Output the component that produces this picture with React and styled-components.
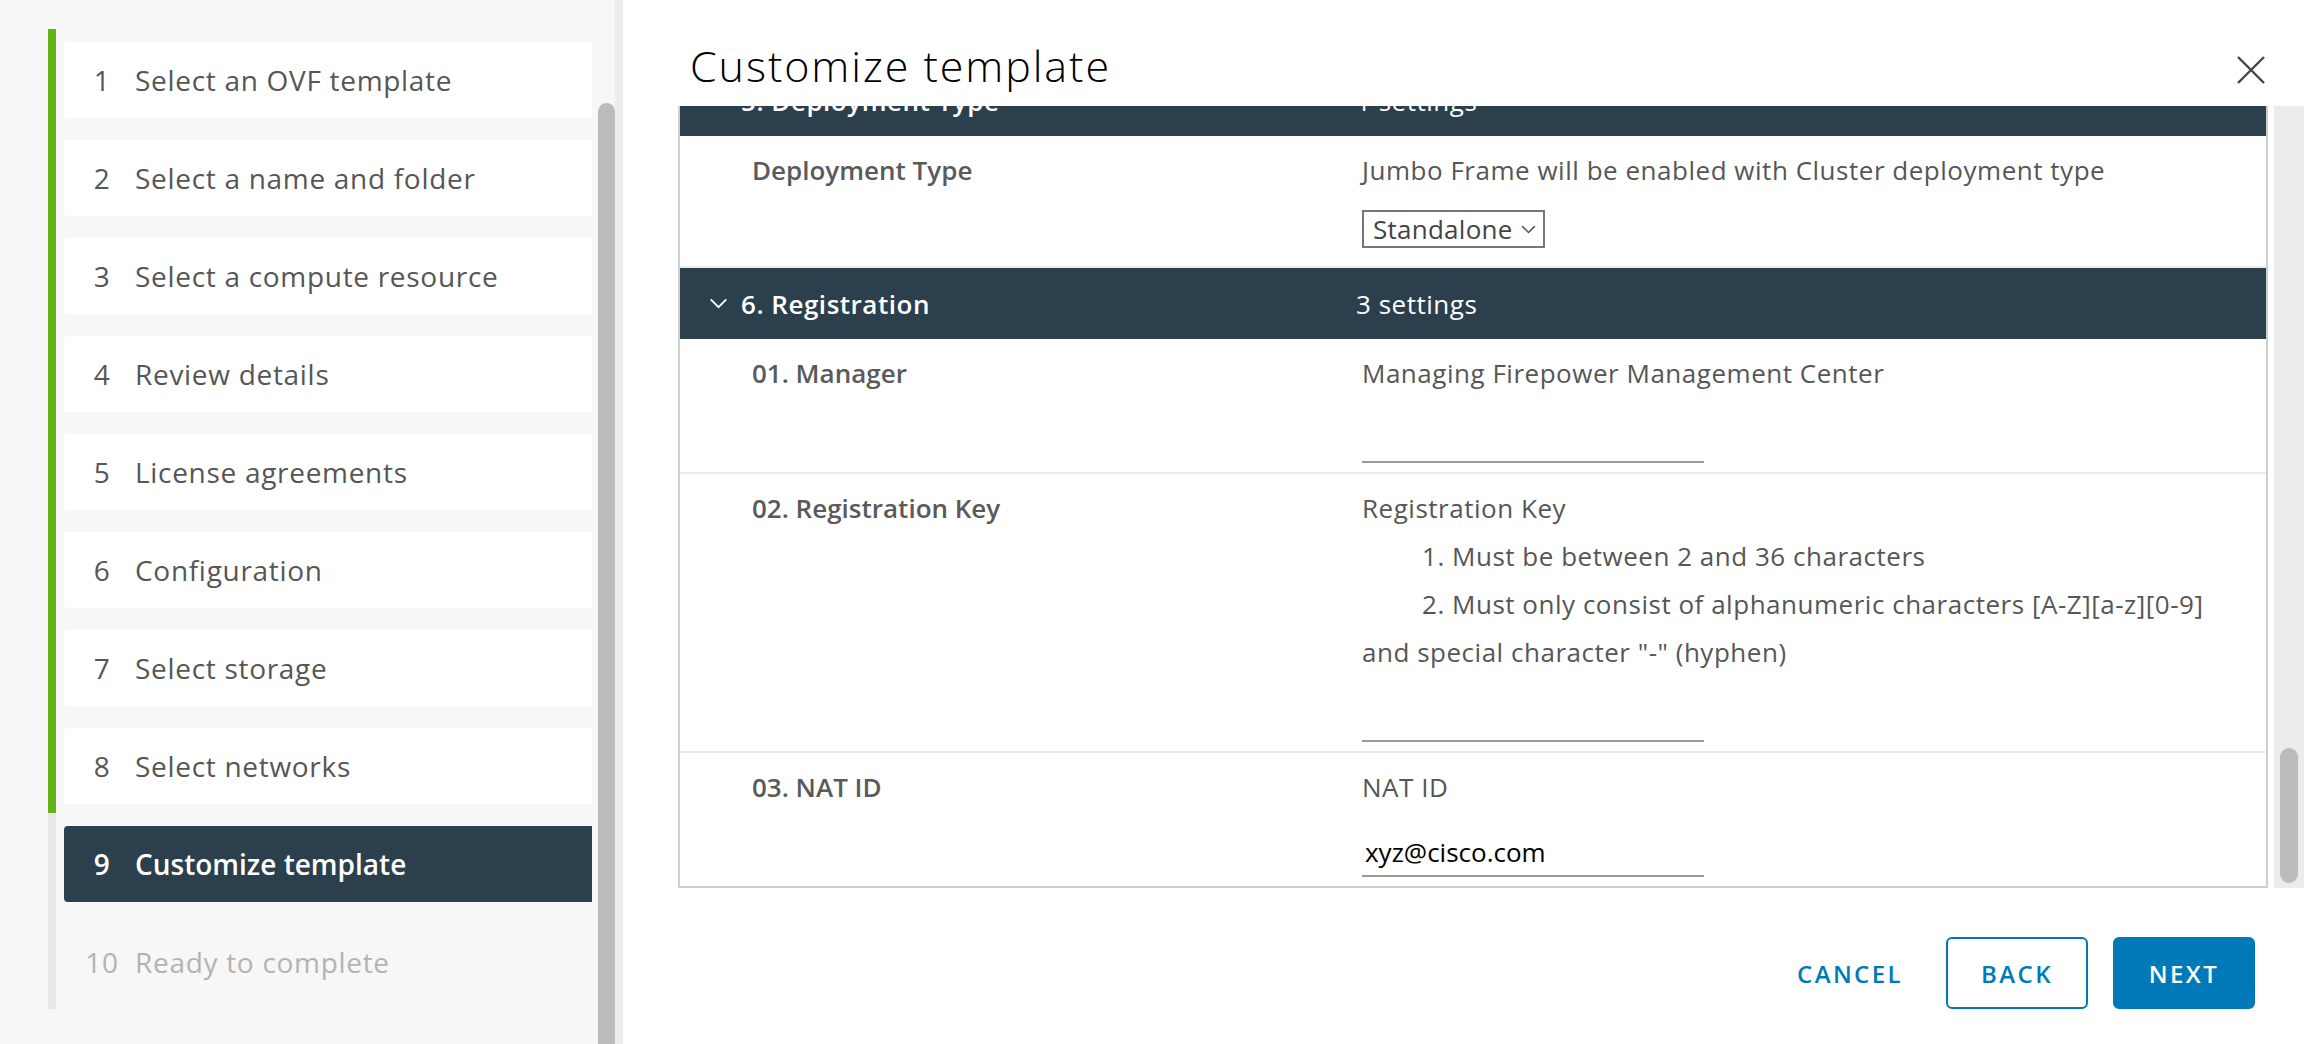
import React, { useLayoutEffect, useRef } from 'react';
import styled, { createGlobalStyle } from 'styled-components';

const GlobalStyle = createGlobalStyle`
  html, body {
    margin: 0;
    padding: 0;
  }
  body {
    font-family: 'Open Sans', 'Liberation Sans', sans-serif;
    background: #fff;
  }
  * {
    box-sizing: border-box;
  }
`;

const steps = [
  'Select an OVF template',
  'Select a name and folder',
  'Select a compute resource',
  'Review details',
  'License agreements',
  'Configuration',
  'Select storage',
  'Select networks',
  'Customize template',
  'Ready to complete',
];
const CURRENT = 9;

const Page = styled.div`
  display: flex;
  width: 2304px;
  height: 1044px;
  overflow: hidden;
`;

// left wizard nav
const NavPane = styled.nav`
  display: flex;
  width: 623px;
  flex-shrink: 0;
  background: #f7f7f7;
`;

const StepList = styled.ol`
  list-style: none;
  margin: 0;
  padding: 29px 0 0 48px;
  flex: 1;
`;

const StepRow = styled.li`
  height: 98px;
  padding-top: 13px;
  border-left: 8px solid ${p => (p.$done ? '#60b515' : '#e9e9e9')};
`;

const StepCard = styled.div`
  display: flex;
  align-items: center;
  height: 76px;
  margin-left: 8px;
  padding-left: 18px;
  border-radius: 4px 0 0 4px;
  font-size: 28px;
  letter-spacing: 0.025em;
  background: ${p => (p.$state === 'active' ? '#2b3f4d' : p.$state === 'done' ? '#fff' : 'transparent')};
  color: ${p => (p.$state === 'active' ? '#fff' : p.$state === 'done' ? '#565656' : '#b3b3b3')};
  font-weight: ${p => (p.$state === 'active' ? 600 : 400)};
`;

const StepNum = styled.span`
  width: 40px;
  text-align: center;
`;

const StepLabel = styled.span`
  margin-left: 13px;
  letter-spacing: ${p => (p.$tight ? '0' : 'inherit')};
`;

const NavScroll = styled.div`
  width: 31px;
  flex-shrink: 0;
  display: flex;
  padding: 103px 0 0 6px;
  border-right: 8px solid #ececec;
`;

const NavThumb = styled.div`
  width: 17px;
  background: #bbbbbb;
  border-radius: 9px 9px 0 0;
`;

// main dialog column
const Main = styled.main`
  flex: 1;
  display: flex;
  flex-direction: column;
  min-width: 0;
`;

const Header = styled.header`
  height: 106px;
  display: flex;
  align-items: center;
  padding: 24px 39px 0 67px;
`;

const Title = styled.h1`
  flex: 1;
  margin: 0;
  font-size: 43px;
  font-weight: 300;
  letter-spacing: 0.045em;
  color: #000;
`;

const CloseIcon = styled.svg`
  width: 28px;
  height: 28px;
  margin-top: 10px;
  stroke: #444;
  stroke-width: 2.4;
  fill: none;
`;

const Body = styled.div`
  flex: 1;
  display: flex;
  gap: 6px;
  padding-left: 55px;
  min-height: 0;
`;

const Viewport = styled.div`
  flex: 1;
  overflow: hidden;
  border: 2px solid #cfcfcf;
  border-top: none;
`;

const ScrollTrack = styled.div`
  width: 30px;
  background: #ececec;
  display: flex;
  flex-direction: column;
  justify-content: flex-end;
  padding: 0 6px 5px;
`;

const ScrollThumb = styled.div`
  height: 135px;
  background: #bbbbbb;
  border-radius: 9px;
`;

const SectionHeader = styled.div`
  display: grid;
  grid-template-columns: 676px 1fr;
  align-items: center;
  height: 71px;
  background: #2b3f4d;
  color: #fff;
  font-size: 26px;
  letter-spacing: 0.02em;
`;

const SectionTitle = styled.div`
  display: flex;
  align-items: center;
  gap: 13px;
  padding-left: 29px;
  font-weight: 600;
`;

const Chevron = styled.svg`
  width: ${p => p.$w}px;
  height: ${p => Math.round(p.$w * 0.6)}px;
  fill: none;
  stroke: ${p => p.$color || '#fff'};
  stroke-width: 2;
`;

const SettingRow = styled.div`
  display: grid;
  grid-template-columns: 682px 1fr;
  padding: 10px 0 9px;
  border-bottom: ${p => (p.$last ? 'none' : '2px solid #ececec')};
  font-size: 26px;
  letter-spacing: 0.02em;
`;

const SettingLabel = styled.div`
  padding-left: 72px;
  line-height: 48px;
  font-weight: 600;
  letter-spacing: 0;
  color: #5a5a5a;
`;

const SettingValue = styled.div`
  display: flex;
  flex-direction: column;
  align-items: flex-start;
`;

const DescLine = styled.div`
  line-height: 48px;
  color: #565656;
  padding-left: ${p => (p.$indent ? '60px' : '0')};
`;

const TextInput = styled.input`
  margin-top: 18px;
  width: 342px;
  height: 48px;
  border: none;
  border-bottom: 2px solid #9a9a9a;
  padding: 0 3px;
  font-family: inherit;
  font-size: 26px;
  color: #000;
  background: transparent;
  outline: none;
`;

const SelectBox = styled.div`
  margin: 16px 0 9px;
  width: 183px;
  height: 38px;
  display: flex;
  align-items: center;
  justify-content: space-between;
  padding: 0 7px 0 9px;
  border: 2px solid #767676;
  color: #444;
  font-size: 26px;
  letter-spacing: 0.01em;
`;

const Footer = styled.footer`
  height: 156px;
  display: flex;
  justify-content: flex-end;
  align-items: flex-start;
  gap: 25px;
  padding: 49px 49px 0 0;
`;

const Button = styled.button`
  min-width: 142px;
  height: 72px;
  border-radius: 6px;
  font-family: inherit;
  font-size: 24px;
  font-weight: 600;
  letter-spacing: 0.1em;
  text-transform: uppercase;
  cursor: pointer;
  border: 2px solid ${p => (p.$variant === 'link' ? 'transparent' : '#0079b8')};
  background: ${p => (p.$variant === 'solid' ? '#0079b8' : '#fff')};
  color: ${p => (p.$variant === 'solid' ? '#fff' : '#0079b8')};
`;

const DownArrow = ({ color, w = 19 }) => (
  <Chevron viewBox="0 0 20 12" $w={w} $color={color}>
    <polyline points="1.5,1.5 10,10 18.5,1.5" />
  </Chevron>
);

const App = () => {
  const viewRef = useRef(null);

  useLayoutEffect(() => {
    // the settings list is scrolled to the bottom
    const el = viewRef.current;
    if (el) el.scrollTop = el.scrollHeight;
  }, []);

  return (
    <>
      <GlobalStyle />
      <Page>
        <NavPane>
          <StepList>
            {steps.map((s, i) => {
              const n = i + 1;
              const state = n < CURRENT ? 'done' : n === CURRENT ? 'active' : 'todo';
              return (
                <StepRow key={s} $done={n < CURRENT}>
                  <StepCard $state={state}>
                    <StepNum>{n}</StepNum>
                    <StepLabel $tight={state === 'active'}>{s}</StepLabel>
                  </StepCard>
                </StepRow>
              );
            })}
          </StepList>
          <NavScroll>
            <NavThumb />
          </NavScroll>
        </NavPane>

        <Main>
          <Header>
            <Title>Customize template</Title>
            <CloseIcon viewBox="0 0 28 28">
              <path d="M1 1 L27 27 M27 1 L1 27" />
            </CloseIcon>
          </Header>

          <Body>
            <Viewport ref={viewRef}>
              <SectionHeader>
                <SectionTitle>
                  <DownArrow />
                  5. Deployment Type
                </SectionTitle>
                <span>1 settings</span>
              </SectionHeader>
              <SettingRow>
                <SettingLabel>Deployment Type</SettingLabel>
                <SettingValue>
                  <DescLine>Jumbo Frame will be enabled with Cluster deployment type</DescLine>
                  <SelectBox>
                    Standalone
                    <DownArrow color="#555" w={15} />
                  </SelectBox>
                </SettingValue>
              </SettingRow>

              <SectionHeader>
                <SectionTitle>
                  <DownArrow />
                  6. Registration
                </SectionTitle>
                <span>3 settings</span>
              </SectionHeader>
              <SettingRow>
                <SettingLabel>01. Manager</SettingLabel>
                <SettingValue>
                  <DescLine>Managing Firepower Management Center</DescLine>
                  <TextInput type="text" defaultValue="" />
                </SettingValue>
              </SettingRow>
              <SettingRow>
                <SettingLabel>02. Registration Key</SettingLabel>
                <SettingValue>
                  <DescLine>Registration Key</DescLine>
                  <DescLine $indent>1. Must be between 2 and 36 characters</DescLine>
                  <DescLine $indent>2. Must only consist of alphanumeric characters [A-Z][a-z][0-9]</DescLine>
                  <DescLine>and special character "-" (hyphen)</DescLine>
                  <TextInput type="password" defaultValue="" />
                </SettingValue>
              </SettingRow>
              <SettingRow $last>
                <SettingLabel>03. NAT ID</SettingLabel>
                <SettingValue>
                  <DescLine>NAT ID</DescLine>
                  <TextInput type="text" defaultValue="xyz@cisco.com" />
                </SettingValue>
              </SettingRow>
            </Viewport>
            <ScrollTrack>
              <ScrollThumb />
            </ScrollTrack>
          </Body>

          <Footer>
            <Button $variant="link">Cancel</Button>
            <Button $variant="outline">Back</Button>
            <Button $variant="solid">Next</Button>
          </Footer>
        </Main>
      </Page>
    </>
  );
};

export default App;
